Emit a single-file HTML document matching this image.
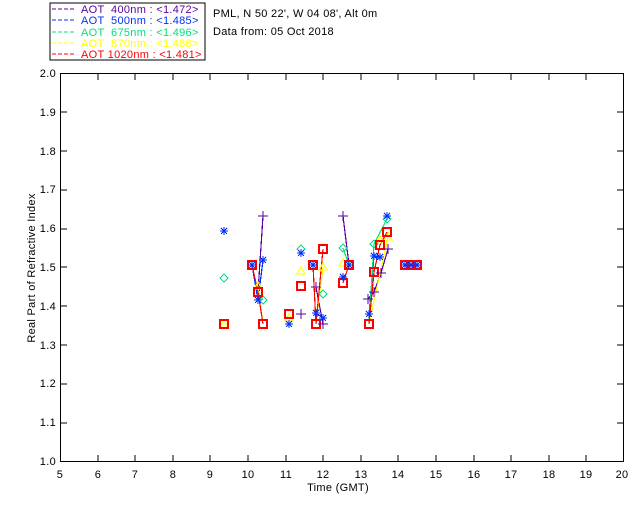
<!DOCTYPE html><html><head><style>body{margin:0;background:#fff}svg{display:block}text{font-family:"Liberation Sans",sans-serif;font-size:11px;letter-spacing:0.3px}</style></head><body>
<svg width="640" height="512" xmlns="http://www.w3.org/2000/svg" shape-rendering="crispEdges">
<defs>
<g id="sq"><rect x="-4" y="-4" width="8" height="8" fill="none" stroke="#f00" stroke-width="2"/></g>
<g id="as" stroke="#0030ff" stroke-width="1.3"><path d="M-4 0H4M0-4V4M-3-3L3 3M-3 3L3-3"/></g>
<g id="pl" stroke="#5a00a0" stroke-width="1.3"><path d="M-5 0H5M0-5V5"/></g>
<g id="dm"><path d="M0-4L4 0L0 4L-4 0Z" fill="none" stroke="#00e080"/></g>
<g id="tr"><path d="M0-4L4 3H-4Z" fill="none" stroke="#ff0" stroke-width="1.2"/></g>
</defs>
<rect x="50" y="3" width="155" height="57" fill="none" stroke="#000"/>
<g stroke-dasharray="4,2" stroke-width="1">
<line x1="52" y1="9" x2="74" y2="9" stroke="#5a00a0"/><line x1="52" y1="20" x2="74" y2="20" stroke="#0030ff"/><line x1="52" y1="32" x2="74" y2="32" stroke="#00e080"/><line x1="52" y1="43" x2="74" y2="43" stroke="#ff0"/><line x1="52" y1="54" x2="74" y2="54" stroke="#f00"/></g>
<text x="81" y="13" fill="#5a00a0" xml:space="preserve">AOT  400nm : &lt;1.472&gt;</text>
<text x="81" y="24" fill="#0030ff" xml:space="preserve">AOT  500nm : &lt;1.485&gt;</text>
<text x="81" y="36" fill="#00e080" xml:space="preserve">AOT  675nm : &lt;1.496&gt;</text>
<text x="81" y="47" fill="#ff0" xml:space="preserve">AOT  870nm : &lt;1.486&gt;</text>
<text x="81" y="58" fill="#f00" xml:space="preserve">AOT 1020nm : &lt;1.481&gt;</text>
<text x="213" y="17">PML, N 50 22', W 04 08', Alt 0m</text>
<text x="213" y="35">Data from: 05 Oct 2018</text>
<rect x="60.5" y="73.5" width="563" height="388" fill="none" stroke="#000"/>
<g font-size="10" text-anchor="end">
<text x="56" y="465">1.0</text><text x="56" y="426">1.1</text><text x="56" y="387">1.2</text><text x="56" y="349">1.3</text><text x="56" y="310">1.4</text><text x="56" y="271">1.5</text><text x="56" y="232">1.6</text><text x="56" y="193">1.7</text><text x="56" y="155">1.8</text><text x="56" y="116">1.9</text><text x="56" y="77">2.0</text></g>
<g text-anchor="middle">
<text x="60" y="478">5</text><text x="98" y="478">6</text><text x="135" y="478">7</text><text x="173" y="478">8</text><text x="210" y="478">9</text><text x="248" y="478">10</text><text x="286" y="478">11</text><text x="323" y="478">12</text><text x="361" y="478">13</text><text x="398" y="478">14</text><text x="436" y="478">15</text><text x="474" y="478">16</text><text x="511" y="478">17</text><text x="549" y="478">18</text><text x="586" y="478">19</text><text x="622" y="478">20</text>
<text x="338" y="491">Time (GMT)</text></g>
<text transform="translate(35,268) rotate(-90)" text-anchor="middle">Real Part of Refractive Index</text>
<path stroke="#000" d="M98 461v-6M135 461v-6M173 461v-6M210 461v-6M248 461v-6M286 461v-6M323 461v-6M361 461v-6M398 461v-6M436 461v-6M474 461v-6M511 461v-6M549 461v-6M586 461v-6M98 74v6M135 74v6M173 74v6M210 74v6M248 74v6M286 74v6M323 74v6M361 74v6M398 74v6M436 74v6M474 74v6M511 74v6M549 74v6M586 74v6M61 423h6M61 384h6M61 345h6M61 306h6M61 267h6M61 229h6M61 190h6M61 151h6M61 112h6M623 423h-6M623 384h-6M623 345h-6M623 306h-6M623 267h-6M623 229h-6M623 190h-6M623 151h-6M623 112h-6"/>
<g fill="none" stroke-width="1.2">
<path stroke="#5a00a0" d="M263 216L258 292L263 324M343 216L349 265M388 249L381 273L374 292L368 299M316 287L323 324"/>
<path stroke="#0030ff" d="M263 260L258 300L252 265M316 313L323 318M380 257L374 256L369 314"/>
<path stroke="#00e080" d="M263 300L258 292M343 248L349 265M387 219L374 244L369 324"/>
<path stroke="#ff0" d="M258 286L263 324M323 267L316 324M388 237L369 324"/>
<path stroke="#f00" d="M252 265L258 292L263 324M313 265L316 324M323 249L316 324M343 283L349 265M369 324L374 272L380 245L387 232"/>
</g>
<use href="#tr" x="224" y="324"/><use href="#tr" x="258" y="286"/><use href="#tr" x="301" y="271"/><use href="#tr" x="323" y="267"/><use href="#tr" x="289" y="318"/><use href="#tr" x="343" y="263"/><use href="#tr" x="388" y="237"/><use href="#tr" x="380" y="240"/>
<use href="#dm" x="224" y="278"/><use href="#dm" x="263" y="300"/><use href="#dm" x="301" y="249"/><use href="#dm" x="323" y="294"/><use href="#dm" x="343" y="248"/><use href="#dm" x="374" y="244"/><use href="#dm" x="387" y="219"/>
<use href="#sq" x="224" y="324"/><use href="#sq" x="252" y="265"/><use href="#sq" x="258" y="292"/><use href="#sq" x="263" y="324"/><use href="#sq" x="289" y="314"/><use href="#sq" x="301" y="286"/><use href="#sq" x="313" y="265"/><use href="#sq" x="316" y="324"/><use href="#sq" x="323" y="249"/><use href="#sq" x="349" y="265"/><use href="#sq" x="343" y="283"/><use href="#sq" x="369" y="324"/><use href="#sq" x="374" y="272"/><use href="#sq" x="380" y="245"/><use href="#sq" x="387" y="232"/><use href="#sq" x="405" y="265"/><use href="#sq" x="411" y="265"/><use href="#sq" x="417" y="265"/>
<use href="#as" x="224" y="231"/><use href="#as" x="263" y="260"/><use href="#as" x="258" y="300"/><use href="#as" x="301" y="253"/><use href="#as" x="289" y="324"/><use href="#as" x="316" y="313"/><use href="#as" x="323" y="318"/><use href="#as" x="343" y="277"/><use href="#as" x="369" y="314"/><use href="#as" x="374" y="256"/><use href="#as" x="380" y="257"/><use href="#as" x="387" y="216"/><use href="#as" x="252" y="265"/><use href="#as" x="313" y="265"/><use href="#as" x="349" y="265"/><use href="#as" x="405" y="265"/><use href="#as" x="411" y="265"/><use href="#as" x="417" y="265"/>
<use href="#pl" x="263" y="216"/><use href="#pl" x="316" y="287"/><use href="#pl" x="301" y="314"/><use href="#pl" x="323" y="324"/><use href="#pl" x="343" y="216"/><use href="#pl" x="388" y="249"/><use href="#pl" x="381" y="273"/><use href="#pl" x="374" y="292"/><use href="#pl" x="368" y="299"/>
</svg></body></html>
